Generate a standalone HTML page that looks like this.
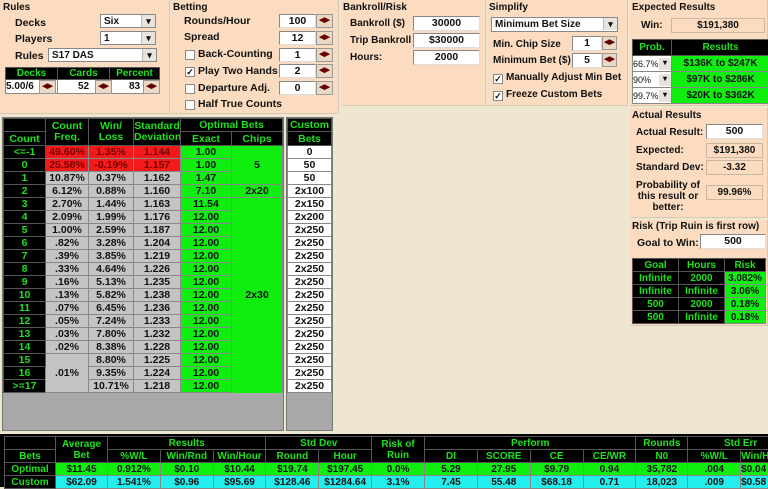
<!DOCTYPE html>
<html><head><meta charset="utf-8"><style>
*{box-sizing:border-box;margin:0;padding:0}
body{width:768px;height:487px;overflow:hidden;background:#efe6d2;font:bold 10px "Liberation Sans",sans-serif;color:#111;position:relative}
.a{position:absolute}
.pan{position:absolute;background:#fbdcc0;border-right:1px solid #d8c8b0;border-bottom:1px solid #d8c8b0}
.t{position:absolute;font-size:10px;white-space:nowrap}
.in{position:absolute;background:#fff;border:1px solid #888;border-right-color:#ddd;border-bottom-color:#ddd;text-align:center;line-height:12px;font-size:10.5px}
.ro{position:absolute;background:#fbdcc0;border:1px solid #c8b8a0;text-align:center;line-height:13px}
.sp{position:absolute;width:17px;height:14px;background:#ead8c4;border:1px solid #999;font-size:7px;line-height:12px;text-align:center;color:#600}
.sel{position:absolute;background:#fff;border:1px solid #888;padding-left:3px;line-height:13px}
.sel:after{content:"▾";position:absolute;right:0;top:0;width:13px;height:12px;background:#e8e4dc;border-left:1px solid #bbb;text-align:center;font-size:9px}
.cb{position:absolute;width:10px;height:10px;background:#fff;border:1px solid #888;font-size:9px;line-height:8px;text-align:center}
table{border-collapse:collapse;position:absolute;table-layout:fixed}
td{border:1px solid #888;text-align:center;white-space:nowrap;overflow:hidden;font-size:10px;padding:0}
.m td{font-size:10.5px}
.h{background:#000;color:#1fe01f;border-color:#555}
.g{background:#10ee10}
.r{background:#f21a1a;color:#700}
.y{background:#c4c4c4}
.w{background:#fff}
.c{background:#22eeee}
</style></head><body>

<div class="pan" style="left:0;top:0;width:170px;height:114px"></div>
<div class="t" style="left:3px;top:2px">Rules</div>
<div class="t" style="left:15px;top:17px;font-size:10.5px">Decks</div>
<div class="sel" style="left:100px;top:14px;width:56px;height:14px">Six</div>
<div class="t" style="left:15px;top:33px;font-size:10.5px">Players</div>
<div class="sel" style="left:100px;top:31px;width:56px;height:14px">1</div>
<div class="t" style="left:15px;top:50px;font-size:10.5px">Rules</div>
<div class="sel" style="left:48px;top:48px;width:109px;height:14px">S17 DAS</div>
<table style="left:5px;top:67px;width:155px">
<tr style="height:12px"><td class="h" style="width:52px">Decks</td><td class="h" style="width:52px">Cards</td><td class="h">Percent</td></tr>
<tr style="height:14px;background:#fff"><td style="text-align:left">5.00/6</td><td>52</td><td>83</td></tr></table>
<div class="sp" style="left:39px;top:80px">◀▶</div><div class="sp" style="left:95px;top:80px">◀▶</div><div class="sp" style="left:143px;top:80px">◀▶</div>

<div class="pan" style="left:171px;top:0;width:168px;height:114px"></div>
<div class="t" style="left:173px;top:2px">Betting</div>
<div class="t" style="left:184px;top:15px;font-size:10.5px">Rounds/Hour</div>
<div class="t" style="left:184px;top:31px;font-size:10.5px">Spread</div>
<div class="cb" style="left:185px;top:50px"></div><div class="t" style="left:198px;top:48px;font-size:10.5px">Back-Counting</div>
<div class="cb" style="left:185px;top:67px">✓</div><div class="t" style="left:198px;top:65px;font-size:10.5px">Play Two Hands</div>
<div class="cb" style="left:185px;top:84px"></div><div class="t" style="left:198px;top:82px;font-size:10.5px">Departure Adj.</div>
<div class="cb" style="left:185px;top:100px"></div><div class="t" style="left:198px;top:98px;font-size:10.5px">Half True Counts</div>
<div class="in" style="left:279px;top:14px;width:37px;height:14px">100</div><div class="sp" style="left:316px;top:14px">◀▶</div>
<div class="in" style="left:279px;top:31px;width:37px;height:14px">12</div><div class="sp" style="left:316px;top:31px">◀▶</div>
<div class="in" style="left:279px;top:48px;width:37px;height:14px">1</div><div class="sp" style="left:316px;top:48px">◀▶</div>
<div class="in" style="left:279px;top:64px;width:37px;height:14px">2</div><div class="sp" style="left:316px;top:64px">◀▶</div>
<div class="in" style="left:279px;top:81px;width:37px;height:14px">0</div><div class="sp" style="left:316px;top:81px">◀▶</div>

<div class="pan" style="left:341px;top:0;width:145px;height:106px"></div>
<div class="t" style="left:343px;top:2px">Bankroll/Risk</div>
<div class="t" style="left:350px;top:18px">Bankroll ($)</div>
<div class="t" style="left:350px;top:35px">Trip Bankroll</div>
<div class="t" style="left:350px;top:52px">Hours:</div>
<div class="in" style="left:413px;top:16px;width:67px;height:15px">30000</div>
<div class="in" style="left:413px;top:33px;width:67px;height:15px">$30000</div>
<div class="in" style="left:413px;top:50px;width:67px;height:15px">2000</div>

<div class="pan" style="left:487px;top:0;width:141px;height:106px"></div>
<div class="t" style="left:489px;top:2px">Simplify</div>
<div class="sel" style="left:491px;top:17px;width:127px;height:15px">Minimum Bet Size</div>
<div class="t" style="left:493px;top:39px">Min. Chip Size</div>
<div class="t" style="left:493px;top:55px">Minimum Bet ($)</div>
<div class="in" style="left:572px;top:36px;width:30px;height:15px">1</div><div class="sp" style="left:602px;top:36px;width:15px">◀▶</div>
<div class="in" style="left:572px;top:53px;width:30px;height:15px">5</div><div class="sp" style="left:602px;top:53px;width:15px">◀▶</div>
<div class="cb" style="left:493px;top:74px">✓</div><div class="t" style="left:506px;top:72px">Manually Adjust Min Bet</div>
<div class="cb" style="left:493px;top:91px">✓</div><div class="t" style="left:506px;top:89px">Freeze Custom Bets</div>

<div class="pan" style="left:630px;top:0;width:138px;height:106px"></div>
<div class="t" style="left:632px;top:2px">Expected Results</div>
<div class="t" style="left:641px;top:20px">Win:</div>
<div class="ro" style="left:671px;top:18px;width:94px;height:15px">$191,380</div>
<table style="left:632px;top:39px;width:138px">
<tr style="height:16px"><td class="h" style="width:39px">Prob.</td><td class="h">Results</td></tr>
<tr style="height:16px"><td class="w" style="text-align:left;font-weight:normal;font-size:9px">66.7%</td><td class="g">$136K to $247K</td></tr>
<tr style="height:16px"><td class="w" style="text-align:left;font-weight:normal;font-size:9px">90%</td><td class="g">$97K to $286K</td></tr>
<tr style="height:16px"><td class="w" style="text-align:left;font-weight:normal;font-size:9px">99.7%</td><td class="g">$20K to $362K</td></tr></table>
<div class="a" style="left:659px;top:58px;width:12px;height:12px;background:#e8e4dc;font-size:8px;text-align:center">▾</div>
<div class="a" style="left:659px;top:74px;width:12px;height:12px;background:#e8e4dc;font-size:8px;text-align:center">▾</div>
<div class="a" style="left:659px;top:90px;width:12px;height:12px;background:#e8e4dc;font-size:8px;text-align:center">▾</div>

<div class="pan" style="left:630px;top:108px;width:138px;height:110px"></div>
<div class="t" style="left:632px;top:110px">Actual Results</div>
<div class="t" style="left:636px;top:127px">Actual Result:</div>
<div class="in" style="left:706px;top:124px;width:57px;height:15px">500</div>
<div class="t" style="left:636px;top:145px">Expected:</div>
<div class="ro" style="left:706px;top:143px;width:57px;height:15px">$191,380</div>
<div class="t" style="left:636px;top:162px">Standard Dev:</div>
<div class="ro" style="left:706px;top:160px;width:57px;height:15px">-3.32</div>
<div class="t" style="left:636px;top:180px;width:64px;text-align:center;white-space:normal;line-height:11px">Probability of this result or better:</div>
<div class="ro" style="left:706px;top:185px;width:57px;height:15px">99.96%</div>

<div class="pan" style="left:630px;top:220px;width:138px;height:106px"></div>
<div class="t" style="left:632px;top:221px">Risk (Trip Ruin is first row)</div>
<div class="t" style="left:637px;top:237px;font-size:10.5px">Goal to Win:</div>
<div class="in" style="left:700px;top:234px;width:66px;height:15px">500</div>
<table style="left:632px;top:258px;width:134px">
<tr style="height:13px"><td class="h" style="width:46px">Goal</td><td class="h" style="width:46px">Hours</td><td class="h">Risk</td></tr>
<tr style="height:13px"><td class="h">Infinite</td><td class="h">2000</td><td class="g">3.082%</td></tr>
<tr style="height:13px"><td class="h">Infinite</td><td class="h">Infinite</td><td class="g">3.06%</td></tr>
<tr style="height:13px"><td class="h">500</td><td class="h">2000</td><td class="g">0.18%</td></tr>
<tr style="height:13px"><td class="h">500</td><td class="h">Infinite</td><td class="g">0.18%</td></tr></table>

<div class="a" style="left:2px;top:117px;width:282px;height:314px;background:#a8a8a8;border:1px solid #777"></div>
<table class="m" style="left:3px;top:118px;width:280px">
<tr style="height:13px"><td class="h" style="width:42px"></td><td class="h" rowspan="2" style="width:43px;line-height:11px">Count<br>Freq.</td><td class="h" rowspan="2" style="width:45px;line-height:11px">Win/<br>Loss</td><td class="h" rowspan="2" style="width:47px;line-height:11px">Standard<br>Deviation</td><td class="h" colspan="2">Optimal Bets</td></tr>
<tr style="height:14px"><td class="h">Count</td><td class="h" style="width:45px">Exact</td><td class="h">Chips</td></tr>
<tr style="height:12.9px"><td class="h">&lt;=-1</td><td class="r">49.60%</td><td class="r">1.35%</td><td class="r">1.144</td><td class="g">1.00</td><td class="g" rowspan="3">5</td></tr>
<tr style="height:12.9px"><td class="h">0</td><td class="r">25.58%</td><td class="r">-0.19%</td><td class="r">1.157</td><td class="g">1.00</td></tr>
<tr style="height:12.9px"><td class="h">1</td><td class="y">10.87%</td><td class="y">0.37%</td><td class="y">1.162</td><td class="g">1.47</td></tr>
<tr style="height:12.9px"><td class="h">2</td><td class="y">6.12%</td><td class="y">0.88%</td><td class="y">1.160</td><td class="g">7.10</td><td class="g">2x20</td></tr>
<tr style="height:12.9px"><td class="h">3</td><td class="y">2.70%</td><td class="y">1.44%</td><td class="y">1.163</td><td class="g">11.54</td><td class="g" rowspan="15" style="border-bottom:none">2x30</td></tr>
<tr style="height:12.9px"><td class="h">4</td><td class="y">2.09%</td><td class="y">1.99%</td><td class="y">1.176</td><td class="g">12.00</td></tr>
<tr style="height:12.9px"><td class="h">5</td><td class="y">1.00%</td><td class="y">2.59%</td><td class="y">1.187</td><td class="g">12.00</td></tr>
<tr style="height:12.9px"><td class="h">6</td><td class="y">.82%</td><td class="y">3.28%</td><td class="y">1.204</td><td class="g">12.00</td></tr>
<tr style="height:12.9px"><td class="h">7</td><td class="y">.39%</td><td class="y">3.85%</td><td class="y">1.219</td><td class="g">12.00</td></tr>
<tr style="height:12.9px"><td class="h">8</td><td class="y">.33%</td><td class="y">4.64%</td><td class="y">1.226</td><td class="g">12.00</td></tr>
<tr style="height:12.9px"><td class="h">9</td><td class="y">.16%</td><td class="y">5.13%</td><td class="y">1.235</td><td class="g">12.00</td></tr>
<tr style="height:12.9px"><td class="h">10</td><td class="y">.13%</td><td class="y">5.82%</td><td class="y">1.238</td><td class="g">12.00</td></tr>
<tr style="height:12.9px"><td class="h">11</td><td class="y">.07%</td><td class="y">6.45%</td><td class="y">1.236</td><td class="g">12.00</td></tr>
<tr style="height:12.9px"><td class="h">12</td><td class="y">.05%</td><td class="y">7.24%</td><td class="y">1.233</td><td class="g">12.00</td></tr>
<tr style="height:12.9px"><td class="h">13</td><td class="y">.03%</td><td class="y">7.80%</td><td class="y">1.232</td><td class="g">12.00</td></tr>
<tr style="height:12.9px"><td class="h">14</td><td class="y">.02%</td><td class="y">8.38%</td><td class="y">1.228</td><td class="g">12.00</td></tr>
<tr style="height:12.9px"><td class="h">15</td><td class="y" rowspan="3">.01%</td><td class="y">8.80%</td><td class="y">1.225</td><td class="g">12.00</td></tr>
<tr style="height:12.9px"><td class="h">16</td><td class="y">9.35%</td><td class="y">1.224</td><td class="g">12.00</td></tr>
<tr style="height:12.9px"><td class="h">&gt;=17</td><td class="y">10.71%</td><td class="y">1.218</td><td class="g">12.00</td></tr>
</table>

<div class="a" style="left:286px;top:117px;width:47px;height:314px;background:#a8a8a8;border:1px solid #777"></div>
<table class="m" style="left:287px;top:118px;width:45px">
<tr style="height:13px"><td class="h">Custom</td></tr>
<tr style="height:14px"><td class="h">Bets</td></tr>
<tr style="height:12.9px"><td class="w">0</td></tr>
<tr style="height:12.9px"><td class="w">50</td></tr>
<tr style="height:12.9px"><td class="w">50</td></tr>
<tr style="height:12.9px"><td class="w">2x100</td></tr>
<tr style="height:12.9px"><td class="w">2x150</td></tr>
<tr style="height:12.9px"><td class="w">2x200</td></tr>
<tr style="height:12.9px"><td class="w">2x250</td></tr>
<tr style="height:12.9px"><td class="w">2x250</td></tr>
<tr style="height:12.9px"><td class="w">2x250</td></tr>
<tr style="height:12.9px"><td class="w">2x250</td></tr>
<tr style="height:12.9px"><td class="w">2x250</td></tr>
<tr style="height:12.9px"><td class="w">2x250</td></tr>
<tr style="height:12.9px"><td class="w">2x250</td></tr>
<tr style="height:12.9px"><td class="w">2x250</td></tr>
<tr style="height:12.9px"><td class="w">2x250</td></tr>
<tr style="height:12.9px"><td class="w">2x250</td></tr>
<tr style="height:12.9px"><td class="w">2x250</td></tr>
<tr style="height:12.9px"><td class="w">2x250</td></tr>
<tr style="height:12.9px"><td class="w">2x250</td></tr>
</table>

<div class="a" style="left:0;top:434px;width:768px;height:53px;background:#000"></div>
<table style="left:4px;top:436px;width:790px">
<tr style="height:13px"><td class="h" style="width:51px"></td><td class="h" rowspan="2" style="width:52px;line-height:11px">Average<br>Bet</td><td class="h" colspan="3">Results</td><td class="h" colspan="2">Std Dev</td><td class="h" rowspan="2" style="width:53px;line-height:11px">Risk of<br>Ruin</td><td class="h" colspan="4">Perform</td><td class="h" style="width:52px">Rounds</td><td class="h" colspan="2">Std Err</td></tr>
<tr style="height:13px"><td class="h">Bets</td><td class="h" style="width:52px">%W/L</td><td class="h" style="width:52px">Win/Rnd</td><td class="h" style="width:53px">Win/Hour</td><td class="h" style="width:51px">Round</td><td class="h" style="width:52px">Hour</td><td class="h" style="width:50px">DI</td><td class="h" style="width:53px">SCORE</td><td class="h" style="width:52px">CE</td><td class="h" style="width:52px">CE/WR</td><td class="h">N0</td><td class="h" style="width:50px">%W/L</td><td class="h" style="text-align:left">Win/Hour</td></tr>
<tr style="height:13px"><td class="h">Optimal</td><td class="g">$11.45</td><td class="g">0.912%</td><td class="g">$0.10</td><td class="g">$10.44</td><td class="g">$19.74</td><td class="g">$197.45</td><td class="g">0.0%</td><td class="g">5.29</td><td class="g">27.95</td><td class="g">$9.79</td><td class="g">0.94</td><td class="g">35,782</td><td class="g">.004</td><td class="g" style="text-align:left">$0.04</td></tr>
<tr style="height:13px"><td class="h">Custom</td><td class="c">$62.09</td><td class="c">1.541%</td><td class="c">$0.96</td><td class="c">$95.69</td><td class="c">$128.46</td><td class="c">$1284.64</td><td class="c">3.1%</td><td class="c">7.45</td><td class="c">55.48</td><td class="c">$68.18</td><td class="c">0.71</td><td class="c">18,023</td><td class="c">.009</td><td class="c" style="text-align:left">$0.58</td></tr>
</table>
</body></html>
